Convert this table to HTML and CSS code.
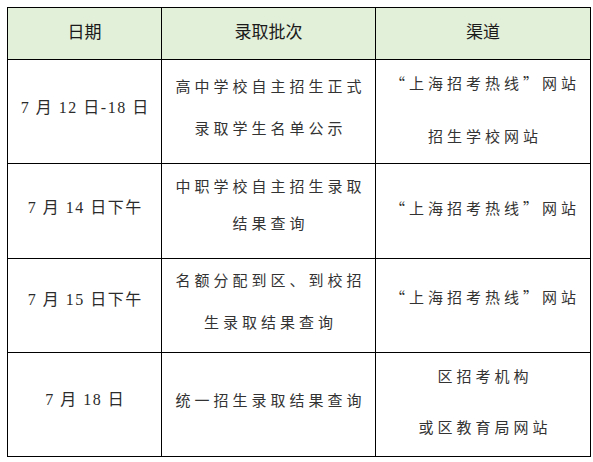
FILE: index.html
```html
<!DOCTYPE html>
<html lang="zh-CN">
<head>
<meta charset="utf-8">
<link rel="stylesheet" href="styles.css">
</head>
<body>
<div class="table">
  <div class="cell head pb5">日期</div>
  <div class="cell head pb5">录取批次</div>
  <div class="cell head pb5">渠道</div>

  <div class="cell date pb8">7 月 12 日-18 日</div>
  <div class="cell txt lh42 pb9"><div class="ln">高中学校自主招生正式</div><div class="ln">录取学生名单公示</div></div>
  <div class="cell txt lh53 pb6"><div class="ln">“上海招考热线”网站</div><div class="ln">招生学校网站</div></div>

  <div class="cell date pb7">7 月 14 日下午</div>
  <div class="cell txt lh37 pb15"><div class="ln">中职学校自主招生录取</div><div class="ln">结果查询</div></div>
  <div class="cell txt pb7"><div class="ln">“上海招考热线”网站</div></div>

  <div class="cell date pb11">7 月 15 日下午</div>
  <div class="cell txt lh42 pb9"><div class="ln">名额分配到区、到校招</div><div class="ln">生录取结果查询</div></div>
  <div class="cell txt pb17"><div class="ln">“上海招考热线”网站</div></div>

  <div class="cell date pb9">7 月 18 日</div>
  <div class="cell txt pb9"><div class="ln">统一招生录取结果查询</div></div>
  <div class="cell txt lh51 pb8"><div class="ln">区招考机构</div><div class="ln">或区教育局网站</div></div>
</div>
</body>
</html>
```

FILE: styles.css
```css
html, body {
  margin: 0;
  padding: 0;
  background: #ffffff;
}
body {
  padding: 7px;
}
.table {
  display: grid;
  grid-template-columns: 154px 214px 215px;
  grid-template-rows: 52px 104px 95px 94px 104px;
  width: 584px;
  border-left: 1px solid #000;
  border-top: 1px solid #000;
  box-sizing: border-box;
}
.cell {
  border-right: 1px solid #000;
  border-bottom: 1px solid #000;
  display: flex;
  flex-direction: column;
  align-items: center;
  justify-content: center;
  box-sizing: border-box;
  font-family: "Noto Sans CJK SC", "Noto Sans", sans-serif;
  white-space: nowrap;
}
.head {
  background: #e2efd9;
  color: #1a1a1a;
  font-size: 17px;
  line-height: 24px;
}
.date {
  font-family: "Liberation Serif", "Noto Sans CJK SC", serif;
  font-size: 16px;
  letter-spacing: 1.5px;
  padding-left: 1.5px;
  color: #2b2b2b;
  line-height: 24px;
}
.txt {
  font-size: 15px;
  color: #333333;
  line-height: 24px;
}
.ln {
  letter-spacing: 4px;
  padding-left: 4px;
}
.lh37 .ln { line-height: 37px; }
.lh42 .ln { line-height: 42px; }
.lh51 .ln { line-height: 51px; }
.lh53 .ln { line-height: 53px; }
.pb5 { padding-bottom: 5px; }
.pb6 { padding-bottom: 6px; }
.pb7 { padding-bottom: 7px; }
.pb8 { padding-bottom: 8px; }
.pb9 { padding-bottom: 9px; }
.pb11 { padding-bottom: 11px; }
.pb15 { padding-bottom: 15px; }
.pb17 { padding-bottom: 17px; }
```
